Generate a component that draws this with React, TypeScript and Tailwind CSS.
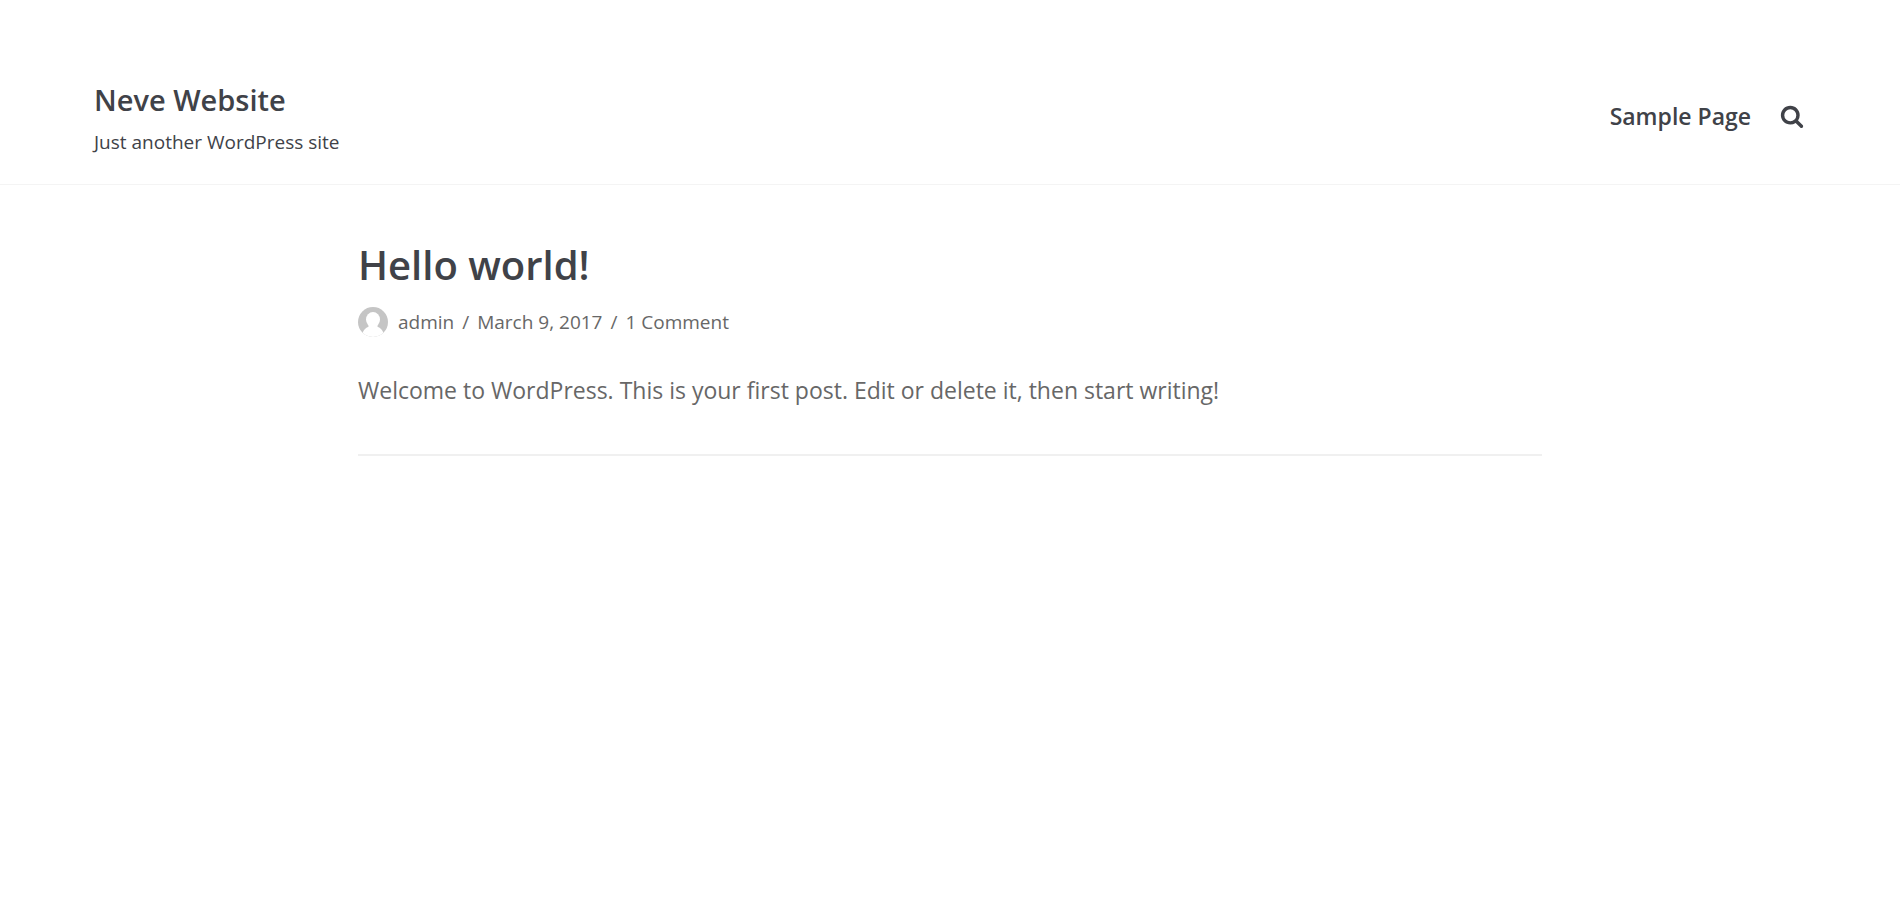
import React from 'react';

const SearchIcon: React.FC = () => (
  <svg
    viewBox="0 0 1792 1792"
    className="h-6 w-6 fill-current"
    aria-hidden="true"
  >
    <path d="M1216 832q0-185-131.5-316.5t-316.5-131.5-316.5 131.5-131.5 316.5 131.5 316.5 316.5 131.5 316.5-131.5 131.5-316.5zm512 832q0 52-38 90t-90 38q-54 0-90-38l-343-342q-179 124-399 124-143 0-273.5-55.5t-225-150-150-225-55.5-273.5 55.5-273.5 150-225 225-150 273.5-55.5 273.5 55.5 225 150 150 225 55.5 273.5q0 220-124 399l343 343q37 37 37 90z" />
  </svg>
);

const Avatar: React.FC = () => (
  <svg viewBox="0 0 30 30" className="h-[30px] w-[30px] rounded-full" aria-hidden="true">
    <rect width="30" height="30" fill="#c5c5c5" />
    <ellipse cx="15" cy="12.6" rx="7" ry="7.6" fill="#fff" />
    <path d="M10.5 17.5h9v2.2c3 1 5 3.3 6 6.3V30h-21v-4c1-3 3-5.300 6-6.300z" fill="#fff" />
  </svg>
);

const Header: React.FC = () => (
  <header className="border-b border-[#f4f4f4] pt-[74px] pr-24 pb-[26px] pl-[94px] text-[#404248]">
    <div className="flex items-center justify-between">
      <a href="#" className="block">
        <h1 className="text-[29px] leading-[52px] font-semibold">
          Neve Website
        </h1>
        <p className="text-[19px] leading-8">Just another WordPress site</p>
      </a>
      <nav className="flex items-center gap-[29px]">
        <a href="#" className="text-[23px] leading-9 font-semibold">
          Sample Page
        </a>
        <button type="button" aria-label="Search">
          <SearchIcon />
        </button>
      </nav>
    </div>
  </header>
);

const Post: React.FC = () => (
  <article className="border-b-2 border-[#f0f0f0] pb-[44px] text-[#676767]">
    <h2 className="text-[40px] leading-[54px] font-semibold text-[#404248]">
      <a href="#">Hello world!</a>
    </h2>
    <div className="mt-3 flex items-center text-[19px] leading-9">
      <Avatar />
      <a href="#" className="ml-[10px]">
        admin
      </a>
      <span className="mx-2">/</span>
      <time dateTime="2017-03-09">March 9, 2017</time>
      <span className="mx-2">/</span>
      <a href="#">1 Comment</a>
    </div>
    <p className="mt-[30px] text-[23px] leading-[40px]">
      Welcome to WordPress. This is your first post. Edit or delete it, then
      start writing!
    </p>
  </article>
);

export default function App() {
  return (
    <div className="min-h-screen bg-white font-['Open_Sans',sans-serif]">
      <Header />
      <main className="mx-auto max-w-[1184px] pt-[53px]">
        <Post />
      </main>
    </div>
  );
}
